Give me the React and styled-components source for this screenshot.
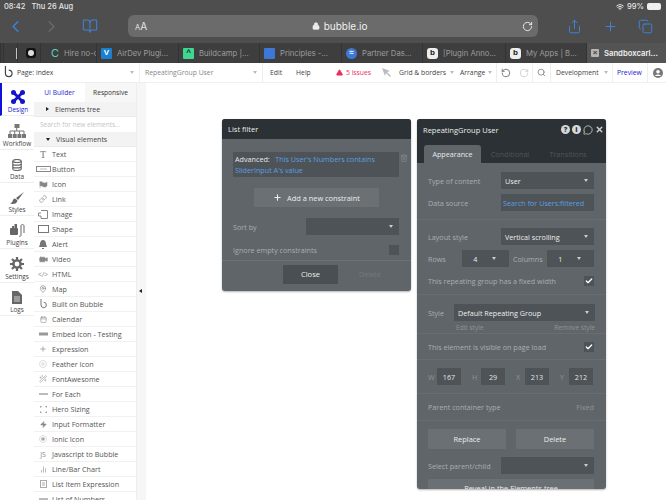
import React from 'react';
import styled, { createGlobalStyle } from 'styled-components';
import { ChevronLeft, ChevronRight, BookOpen, Lock, RotateCw, Share, Plus, Copy, Wifi, X, Search, RotateCcw, AlertTriangle, Trash2, Check, MessageCircle, Link as LinkIcon, Video, MapPin, Calendar, Wand2, Zap, BarChart2 } from 'lucide-react';

const Global = createGlobalStyle`
  html, body { margin: 0; padding: 0; width: 666px; height: 500px; overflow: hidden; background: #fff; }
  body { font-family: "Open Sans", "Liberation Sans", sans-serif; }
  * { box-sizing: border-box; }
`;
const Page = styled.div`width: 666px; height: 500px; display: flex; flex-direction: column; overflow: hidden;`;
const Chrome = styled.div`height: 43px; background: #4e4e4e; display: flex; flex-direction: column; flex: none; font-family: "Inter", "Liberation Sans", sans-serif;`;
const Status = styled.div`height: 13px; padding: 0 5px 0 4px; display: flex; align-items: center; justify-content: space-between; color: #e4e4e4; font-size: 7.5px; font-weight: 500;`;
const StatusGroup = styled.div`display: flex; align-items: center; gap: ${p => p.$gap || 3}px;`;
const Battery = styled.span`width: 14px; height: 7px; border-radius: 2px; background: #eee; display: block;`;
const SafariBar = styled.div`flex: 1; display: flex; align-items: flex-start; padding-top: 2px;`;
const Navs = styled.div`width: 128px; flex: none; display: flex; align-items: center; height: 22px; padding-left: 6px; color: #3f82d8;`;
const Forward = styled.span`color: #6a6a6a; margin-left: 17px; display: flex;`;
const Book = styled.span`color: #3f82d8; margin-left: 21px; display: flex;`;
const Url = styled.div`width: 410px; height: 22px; flex: none; background: #6b6b6b; border-radius: 6px; display: flex; align-items: center; justify-content: space-between; padding: 0 5px 0 7px; color: #eee;`;
const Aa = styled.span`font-size: 10px; color: #e6e6e6;`;
const Small = styled.small`font-size: 7.5px;`;
const Domain = styled.span`font-size: 10px; display: flex; align-items: center; gap: 4px; color: #f0f0f0; margin-left: 10px;`;
const Actions = styled.div`flex: 1; display: flex; align-items: center; justify-content: space-between; height: 22px; padding: 0 13px 0 29px; color: #3f82d8;`;
const Tabs = styled.div`height: 20px; background: #3e3e3e; display: flex; flex: none; font-family: "Inter", "Liberation Sans", sans-serif;`;
const Tab = styled.div`width: ${p => p.$w}px; flex: none; border-left: 1px solid #333; display: flex; align-items: center; gap: 5px; padding-left: ${p => p.$pad ?? 4}px; color: ${p => p.$active ? '#f0f0f0' : '#9c9c9c'}; background: ${p => p.$active ? '#545454' : 'transparent'}; font-size: 7.7px; font-weight: ${p => p.$active ? 600 : 400}; white-space: nowrap; overflow: hidden;`;
const TabTick = styled.span`width: 1px; height: 11px; background: #c4c4c4; flex: none;`;
const Fav = styled.span`width: ${p => p.$s || 11}px; height: ${p => p.$s || 11}px; flex: none; border-radius: ${p => p.$r || 1}px; background: ${p => p.$bg}; display: flex; align-items: center; justify-content: center; color: ${p => p.$c || '#fff'}; font-size: 8px; font-weight: 700; font-family: "Liberation Sans", sans-serif; line-height: 1;`;
const Ring = styled.span`width: 6px; height: 6px; border-radius: 50%; background: #ddd;`;
const CMark = styled.span`color: #5ad0c0; font-size: 11px; margin-left: 5px;`;

const TopBar = styled.div`height: 20px; flex: none; background: #fff; display: flex; align-items: center; border-bottom: 1px solid #efefef; font-size: 6.8px; color: #444; white-space: nowrap;`;
const Logo = styled.div`width: 16px; flex: none; display: flex; justify-content: center;`;
const TopCell = styled.div`height: 100%; flex: none; width: ${p => p.$w}px; display: flex; align-items: center; justify-content: ${p => p.$between ? 'space-between' : 'flex-start'}; padding: ${p => p.$pad || '0 5px'}; gap: ${p => p.$gap || 0}px; border-right: ${p => p.$line ? '1px solid #eee' : 'none'}; color: ${p => p.$c || 'inherit'};`;
const Caret = styled.span`width: 0; height: 0; border-left: 2.5px solid transparent; border-right: 2.5px solid transparent; border-top: 3px solid ${p => p.$c || '#bbb'}; display: inline-block; flex: none;`;
const Body = styled.div`flex: 1; display: flex; min-height: 0;`;
const Nav = styled.div`width: 34px; flex: none; background: #fff;`;
const NavItem = styled.div`height: 33.3px; display: flex; flex-direction: column; align-items: center; justify-content: flex-end; padding-bottom: 1px; gap: 1px; font-size: 6.4px; line-height: 9px; color: ${p => p.$active ? '#1a1ad0' : '#444'}; border-left: ${p => p.$active ? '2px solid #1010d8' : 'none'}; border-bottom: 1px solid #eee;`;
const Panel = styled.div`width: 102px; flex: none; background: #f3f3f3; display: flex; flex-direction: column; overflow: hidden;`;
const PanelTabs = styled.div`height: 19px; display: flex; font-size: 6.6px; flex: none;`;
const PanelTab = styled.div`flex: 1; display: flex; align-items: center; justify-content: center; color: ${p => p.$active ? '#2a2ad0' : '#333'}; background: ${p => p.$active ? '#fff' : '#f7f7f7'};`;
const Section = styled.div`height: 15px; flex: none; background: #f3f3f3; display: flex; align-items: center; gap: 6px; padding-left: 12px; font-size: 7px; color: #444; border-bottom: 1px solid #eaeaea;`;
const Tri = styled.span`width: 0; height: 0; display: inline-block; ${p => p.$down ? 'border-left: 2.5px solid transparent; border-right: 2.5px solid transparent; border-top: 3px solid #222;' : 'border-top: 2.5px solid transparent; border-bottom: 2.5px solid transparent; border-left: 3px solid #222;'}`;
const SearchBox = styled.div`height: 15px; flex: none; background: #fff; display: flex; align-items: center; padding-left: 6px; color: #c4c4c4; font-size: 6.5px;`;
const Row = styled.div`height: 15px; flex: none; background: #fff; border-bottom: 1px solid #f1f1f1; display: flex; align-items: center; font-size: 7.2px; color: #555; white-space: nowrap;`;
const RowIcon = styled.span`width: 18px; flex: none; display: flex; align-items: center; justify-content: center; color: #8a8a8a; font-size: 7px;`;
const SerifT = styled.span`font-family: "Liberation Serif", serif; font-size: 10px; color: #777;`;
const Gutter = styled.div`width: 10px; flex: none; background: #f6f6f6; border-left: 1px solid #eee; position: relative;`;
const Handle = styled.span`position: absolute; left: 2px; top: 206px; width: 0; height: 0; border-top: 2.5px solid transparent; border-bottom: 2.5px solid transparent; border-right: 3px solid #222;`;
const Canvas = styled.div`flex: 1; background: #fff; position: relative;`;

const Window = styled.div`position: absolute; left: ${p => p.$x}px; top: ${p => p.$y}px; width: ${p => p.$w}px; height: ${p => p.$h}px; background: #60656a; border-radius: 3px; box-shadow: 0 1px 2px rgba(0,0,0,.3); overflow: hidden; color: #a9adb0; font-size: 7.2px; white-space: nowrap;`;
const Title = styled.div`height: ${p => p.$h}px; background: #2b3134; color: #ececec; font-size: 7.5px; display: flex; align-items: center; justify-content: space-between; padding-left: 6px;`;
const TitleIcons = styled.div`display: flex; align-items: center; gap: 2px; padding-right: 2px; color: #c9cccd;`;
const TabBar = styled.div`height: 23px; background: #2b3134; display: flex; align-items: flex-end; padding-left: 7px;`;
const WinTab = styled.div`height: 18px; width: ${p => p.$w}px; border-radius: 3px 3px 0 0; background: ${p => p.$active ? '#60656a' : 'transparent'}; color: ${p => p.$active ? '#e6e6e6' : '#50565a'}; display: flex; align-items: center; justify-content: center; font-size: 7.2px; padding-bottom: 1px;`;
const Group = styled.div`padding: ${p => p.$pad}; border-bottom: ${p => p.$last ? 'none' : '1px solid #686d71'}; display: flex; flex-direction: column; gap: ${p => p.$gap || 5}px;`;
const FieldRow = styled.div`display: flex; align-items: center; justify-content: space-between; flex: none; height: ${p => p.$h || 17}px; margin-bottom: ${p => p.$mb || 0}px;`;
const RowsGrid = styled.div`display: grid; grid-template-columns: 34px 47px 38px 47px; align-items: center; height: 17px;`;
const ColLabel = styled.span`padding-left: 4px;`;
const Select = styled.div`width: ${p => p.$w}px; height: 17px; flex: none; background: #4e5357; color: ${p => p.$blue ? '#5b9fe0' : '#eceded'}; display: flex; align-items: center; justify-content: ${p => p.$center ? 'space-around' : 'space-between'}; padding: 0 6px 0 ${p => p.$blue ? 2 : 4}px; font-size: 7.2px;`;
const Box = styled.span`width: 10px; height: 10px; background: #4e5357; display: flex; align-items: center; justify-content: center; color: #fff; flex: none;`;
const Hints = styled.div`display: flex; justify-content: space-between; padding-left: 28px; font-size: 6.6px; color: #8f9497; margin-top: -3px; line-height: 9px;`;
const NumRow = styled.div`display: flex; gap: 11px; height: 17px;`;
const Pair = styled.div`display: flex; align-items: center; color: #8f9497;`;
const PairLabel = styled.span`width: 9px; flex: none;`;
const Num = styled.span`width: 24px; height: 17px; background: #4e5357; color: #e4e4e4; display: flex; align-items: center; justify-content: center; font-size: 7.2px;`;
const Dim = styled.span`color: #8f9497;`;
const Filter = styled.div`margin: 13px 12px 0 11px; height: 25px; display: flex; position: relative;`;
const FilterBody = styled.div`flex: 1; background: #4e5357; color: #e8e8e8; line-height: 10.6px; padding: 2px; font-size: 7.2px;`;
const Blue = styled.span`color: #5b9fe0;`;
const Trash = styled.span`position: absolute; right: -9px; top: 2px; color: #898e91; display: flex;`;
const WideBtn = styled.div`width: ${p => p.$w ? p.$w + 'px' : 'auto'}; height: ${p => p.$h || 20}px; background: #6b7074; display: flex; align-items: center; justify-content: center; gap: 5px; font-size: 7.4px; border-radius: 1px; flex: none; color: #ecedee;`;
const AddWrap = styled.div`display: flex; justify-content: center; margin: 11px 0;`;
const Foot = styled.div`height: 31px; margin-top: 2px; border-top: 1px solid #6d7276; display: flex; align-items: center; padding: 0 0 4px 61px; gap: 21px;`;
const CloseBtn = styled.div`width: 55px; height: 19px; background: #4a4f53; color: #eee; display: flex; align-items: center; justify-content: center; font-size: 7.6px;`;
const Faint = styled.span`color: #74797d; font-size: 7.2px;`;
const Disc = styled.span`width: 9px; height: 9px; border-radius: 50%; background: #d6d8d9; color: #2b3134; font-size: 7px; font-weight: 800; display: flex; align-items: center; justify-content: center; line-height: 1;`;

function ButtonIco() { return <svg width="15" height="6"><rect x=".5" y=".5" width="14" height="5" fill="none" stroke="#888" /><path d="M4 3h7" stroke="#bbb" /></svg>; }
function ShapeIco() { return <svg width="11" height="8"><rect x=".5" y=".5" width="10" height="7" fill="none" stroke="#777" /></svg>; }
function FlagIco() { return <svg width="9" height="7"><path d="M1 0v7M1 1c2-1 3 1 4 1s2 0 3-1v4c-1 1-2 1-3 1S3 4 1 5z" fill="#888" stroke="#888" strokeWidth=".5" /></svg>; }
function ImageIco() { return <svg width="10" height="9"><path d="M3 .5h6.5v8H3V6M3 3H.5v3H3" fill="none" stroke="#888" /></svg>; }
function BellIco() { return <svg width="8" height="9"><path d="M4 0c2 0 3 2 3 4l1 3H0l1-3c0-2 1-4 3-4zM3 8h2v1H3z" fill="#777" /></svg>; }
function DashIco({ h = 3, c = '#999' }) { return <svg width="9" height="4"><rect y={(4 - h) / 2} width="9" height={h} fill={c} /></svg>; }
function CodeIco() { return <span>&lt;/&gt;</span>; }
function DotIco({ c = '#aaa' }) { return <svg width="8" height="8"><circle cx="4" cy="4" r="3.5" fill="none" stroke="#ddd" /><circle cx="4" cy="4" r="1.8" fill={c} /></svg>; }
function HeroIco() { return <svg width="7" height="7"><path d="M0 2V0h2M5 0h2v2M7 5v2H5M2 7H0V5" fill="none" stroke="#888" /></svg>; }
function ListIco() { return <svg width="7" height="8"><rect x=".5" y=".5" width="6" height="7" fill="none" stroke="#aaa" /><path d="M2 3h3M2 5h3" stroke="#aaa" /></svg>; }
function BubbleB({ s = 9, c = '#777' }) { return <svg width={s} height={s * 10 / 9} viewBox="0 0 9 10"><path d="M2 0v6a2.7 2.7 0 1 0 2.7-2.7" fill="none" stroke={c} strokeWidth="1" /></svg>; }

function DesignIco() { return <svg width="14" height="14" viewBox="0 0 14 14" fill="#1414c8"><path d="M3 1 13 11l-2 2L1 3z" /><path d="M11 1 1 11l2 2L13 3z" /><circle cx="2.5" cy="2.5" r="2.5" /><circle cx="11.5" cy="2.5" r="2.5" /><circle cx="2.5" cy="11.5" r="2.5" /><circle cx="11.5" cy="11.5" r="2.5" /></svg>; }
function WorkflowIco() { return <svg width="18" height="14" viewBox="0 0 18 14" fill="#777"><rect x="6.5" y="0" width="5" height="4" /><rect x="0" y="10" width="4" height="4" /><rect x="4.7" y="10" width="4" height="4" /><rect x="9.4" y="10" width="4" height="4" /><rect x="14" y="10" width="4" height="4" /><path d="M8.7 4v3M2 7h14v3M2 7v3M6.7 7v3M11.4 7v3" stroke="#777" fill="none" /></svg>; }
function DataIco() { return <svg width="10" height="12" viewBox="0 0 10 12" fill="none" stroke="#666" strokeWidth="1.2"><ellipse cx="5" cy="2" rx="4.2" ry="1.5" /><path d="M.8 2v8c0 1 1.9 1.5 4.2 1.5S9.2 11 9.2 10V2M.8 4.7c0 1 1.9 1.5 4.2 1.5s4.2-.5 4.2-1.5M.8 7.4c0 1 1.9 1.5 4.2 1.5s4.2-.5 4.2-1.5" /></svg>; }
function BrushIco() { return <svg width="14" height="12" viewBox="0 0 14 12" fill="#666"><path d="M14 0 6 6l2 2zM5 6.5c-2 0-2 2-2.5 3S0 11.5 0 11.5c3 1 7 .5 7.5-3z" /></svg>; }
function PluginIco() { return <svg width="15" height="13" viewBox="0 0 15 13" fill="#666"><rect x="0" y="4" width="8" height="7" rx="1" /><rect x="2" y="2" width="2" height="2" /><rect x="4.5" y="0" width="2.5" height="4" /><path d="M9 12c1 1 2 0 2-1V2c0-2 3-2 3 0v7" fill="none" stroke="#666" /></svg>; }
function GearIco() { return <svg width="14" height="14" viewBox="0 0 14 14"><circle cx="7" cy="7" r="3.6" fill="none" stroke="#666" strokeWidth="2.4" /><path d="M7 0v3M7 11v3M0 7h3M11 7h3M2 2l2 2M10 10l2 2M12 2l-2 2M4 10l-2 2" stroke="#666" strokeWidth="2.2" /></svg>; }
function LogsIco() { return <svg width="10" height="13" viewBox="0 0 10 13"><path d="M0 0h6l4 4v9H0z" fill="#666" /><path d="M2 6h6M2 8h6M2 10h6" stroke="#fff" strokeWidth=".7" /></svg>; }
function CursorIco() { return <svg width="9" height="9"><path d="M0 0l8 3-3 1 4 4-1 1-4-4-1 3z" fill="#bbb" /></svg>; }
function UserIco() { return <svg width="10" height="10" viewBox="0 0 10 10"><circle cx="5" cy="5" r="5" fill="#777" /><circle cx="5" cy="3.8" r="1.8" fill="#fff" /><path d="M2 8c.5-2 5.5-2 6 0" fill="#fff" /></svg>; }

const rows = [
  ['Text', <SerifT>T</SerifT>], ['Button', <ButtonIco />], ['Icon', <FlagIco />], ['Link', <LinkIcon size={8} />],
  ['Image', <ImageIco />], ['Shape', <ShapeIco />], ['Alert', <BellIco />], ['Video', <Video size={9} fill="#888" />],
  ['HTML', <CodeIco />], ['Map', <MapPin size={8} />], ['Built on Bubble', <BubbleB />], ['Calendar', <Calendar size={7} />],
  ['Embed Icon - Testing', <DashIco />], ['Expression', <Plus size={8} />], ['Feather Icon', <DotIco c="#e4e4e4" />], ['FontAwesome', <Wand2 size={8} color="#aaa" />],
  ['For Each', <DashIco h={2} c="#bbb" />], ['Hero Sizing', <HeroIco />], ['Input Formatter', <Zap size={7} fill="#888" />], ['Ionic Icon', <DotIco />],
  ['Javascript to Bubble', <span>JS</span>], ['Line/Bar Chart', <BarChart2 size={7} />], ['List Item Expression', <ListIco />], ['List of Numbers', <DashIco h={2} c="#bbb" />],
];

const navs = [
  ['Design', <DesignIco />, true], ['Workflow', <WorkflowIco />], ['Data', <DataIco />], ['Styles', <BrushIco />],
  ['Plugins', <PluginIco />], ['Settings', <GearIco />], ['Logs', <LogsIco />],
];

export default function App() {
  return (
    <Page>
      <Global />
      <Chrome>
        <Status>
          <StatusGroup $gap={6}><span>08:42</span><span>Thu 26 Aug</span></StatusGroup>
          <StatusGroup><Wifi size={8} strokeWidth={3} /><span>99%</span><Battery /></StatusGroup>
        </Status>
        <SafariBar>
          <Navs><ChevronLeft size={19} strokeWidth={1.7} /><Forward><ChevronRight size={19} strokeWidth={1.7} /></Forward><Book><BookOpen size={16} strokeWidth={1.6} /></Book></Navs>
          <Url><Aa><Small>A</Small>A</Aa><Domain><Lock size={8} fill="#eee" />bubble.io</Domain><RotateCw size={11} /></Url>
          <Actions><Share size={15} strokeWidth={1.6} /><Plus size={15} strokeWidth={1.6} /><Copy size={15} strokeWidth={1.6} /></Actions>
        </SafariBar>
      </Chrome>
      <Tabs>
        <Tab $w={3} $pad={0} />
        <Tab $w={14} $pad={12}><TabTick /></Tab>
        <Tab $w={23} $pad={8}><Fav $bg="#111" $r={3} $s={10}><Ring /></Fav></Tab>
        <Tab $w={56} $pad={5}><CMark>C</CMark>Hire no-c</Tab>
        <Tab $w={82}><Fav $bg="#1c7fd0">V</Fav>AirDev Plugi...</Tab>
        <Tab $w={81}><Fav $bg="#3fd68f" $c="#123">^</Fav>Buildcamp |...</Tab>
        <Tab $w={82}><Fav $bg="#3d78d8" />Principles -...</Tab>
        <Tab $w={81}><Fav $bg="#3d78d8" $r={6}>≈</Fav>Partner Das...</Tab>
        <Tab $w={83}><Fav $bg="#eee" $c="#111" $r={3}>b</Fav>[Plugin Anno...</Tab>
        <Tab $w={81}><Fav $bg="#eee" $c="#111" $r={3}>b</Fav>My Apps | B...</Tab>
        <Tab $w={80} $active><Fav $bg="#b5b5b5" $c="#444" $s={8}>×</Fav>Sandboxcarl...</Tab>
      </Tabs>
      <TopBar>
        <Logo><BubbleB s={11} c="#444" /></Logo>
        <TopCell $w={124} $line $between $pad="0 5px 0 1px">Page: index<Caret /></TopCell>
        <TopCell $w={123} $line $between $c="#888">RepeatingGroup User<Caret /></TopCell>
        <TopCell $w={70} $gap={14} $pad="0 0 0 7px"><span>Edit</span><span>Help</span></TopCell>
        <TopCell $w={46} $gap={3} $c="#e8305a" $pad="0 0 0 3px"><AlertTriangle size={7} fill="#e8305a" color="#e8305a" />5 issues</TopCell>
        <TopCell $w={16} $pad="0 0 0 3px"><CursorIco /></TopCell>
        <TopCell $w={61} $gap={4} $pad="0 0 0 4px">Grid &amp; borders<Caret /></TopCell>
        <TopCell $w={41} $gap={3} $line $pad="0 0 0 4px">Arrange<Caret /></TopCell>
        <TopCell $w={36} $gap={8} $line $pad="0 0 0 4px"><RotateCcw size={10} color="#666" /><RotateCw size={10} color="#ccc" /></TopCell>
        <TopCell $w={18} $line $pad="0 0 0 4px"><Search size={9} color="#777" /></TopCell>
        <TopCell $w={62} $gap={5} $line $pad="0 0 0 5px">Development<Caret /></TopCell>
        <TopCell $w={35} $line $c="#2222cc" $pad="0 0 0 4px">Preview</TopCell>
        <TopCell $w={19} $pad="0 0 0 5px"><UserIco /></TopCell>
      </TopBar>
      <Body>
        <Nav>
          {navs.map(([l, ic, a]) => <NavItem key={l} $active={a}>{ic}<span>{l}</span></NavItem>)}
        </Nav>
        <Panel>
          <PanelTabs><PanelTab $active>UI Builder</PanelTab><PanelTab>Responsive</PanelTab></PanelTabs>
          <Section><Tri />Elements tree</Section>
          <SearchBox>Search for new elements...</SearchBox>
          <Section><Tri $down />Visual elements</Section>
          {rows.map(([l, ic]) => <Row key={l}><RowIcon>{ic}</RowIcon>{l}</Row>)}
        </Panel>
        <Gutter><Handle /></Gutter>
        <Canvas>
          <Window $x={76} $y={36} $w={189} $h={172}>
            <Title $h={20}>List filter</Title>
            <Filter>
              <FilterBody>Advanced: &nbsp; <Blue>This User's Numbers contains<br />SliderInput A's value</Blue></FilterBody>
              <Trash><Trash2 size={8} /></Trash>
            </Filter>
            <AddWrap><WideBtn $w={125} $h={19}><Plus size={9} strokeWidth={3} />Add a new constraint</WideBtn></AddWrap>
            <Group $last $pad="0 12px 0 11px" $gap={6}>
              <FieldRow>Sort by<Select $w={93}><span /><Caret $c="#ccc" /></Select></FieldRow>
              <FieldRow>Ignore empty constraints<Box /></FieldRow>
            </Group>
            <Foot><CloseBtn>Close</CloseBtn><Faint>Delete</Faint></Foot>
          </Window>
          <Window $x={271} $y={36} $w={189} $h={370}>
            <Title $h={21}>RepeatingGroup User
              <TitleIcons><Disc>?</Disc><Disc>i</Disc><MessageCircle size={10} /><X size={9} strokeWidth={4} /></TitleIcons>
            </Title>
            <TabBar>
              <WinTab $w={57} $active>Appearance</WinTab><WinTab $w={58}>Conditional</WinTab><WinTab $w={58}>Transitions</WinTab>
            </TabBar>
            <Group $pad="9px 12px 8px 11px">
              <FieldRow>Type of content<Select $w={93}>User<Caret $c="#ccc" /></Select></FieldRow>
              <FieldRow>Data source<Select $w={93} $blue>Search for Users:filtered</Select></FieldRow>
            </Group>
            <Group $pad="8px 12px 5px 11px">
              <FieldRow>Layout style<Select $w={93}>Vertical scrolling<Caret $c="#ccc" /></Select></FieldRow>
              <RowsGrid><span>Rows</span><Select $w={47} $center>4<Caret $c="#ccc" /></Select><ColLabel>Columns</ColLabel><Select $w={47} $center>1<Caret $c="#ccc" /></Select></RowsGrid>
              <FieldRow>This repeating group has a fixed width<Box><Check size={8} strokeWidth={4} /></Box></FieldRow>
            </Group>
            <Group $pad="9px 11px 1px 11px">
              <FieldRow>Style<Select $w={141}>Default Repeating Group<Caret $c="#ccc" /></Select></FieldRow>
              <Hints><span>Edit style</span><span>Remove style</span></Hints>
            </Group>
            <Group $pad="6px 12px 6px 11px">
              <FieldRow $h={13}>This element is visible on page load<Box><Check size={8} strokeWidth={4} /></Box></FieldRow>
            </Group>
            <Group $pad="8px 12px 8px 11px">
              <NumRow>
                <Pair><PairLabel>W</PairLabel><Num>167</Num></Pair>
                <Pair><PairLabel>H</PairLabel><Num>29</Num></Pair>
                <Pair><PairLabel>X</PairLabel><Num>213</Num></Pair>
                <Pair><PairLabel>Y</PairLabel><Num>212</Num></Pair>
              </NumRow>
            </Group>
            <Group $pad="6px 12px 7px 11px">
              <FieldRow $h={13}>Parent container type<Dim>Fixed</Dim></FieldRow>
            </Group>
            <Group $last $pad="8px 12px 0 11px" $gap={5}>
              <FieldRow $h={20} $mb={3}><WideBtn $w={78}>Replace</WideBtn><WideBtn $w={78}>Delete</WideBtn></FieldRow>
              <FieldRow>Select parent/child<Select $w={93}><span /><Caret $c="#ccc" /></Select></FieldRow>
              <WideBtn $h={18}>Reveal in the Elements tree</WideBtn>
            </Group>
          </Window>
        </Canvas>
      </Body>
    </Page>
  );
}
